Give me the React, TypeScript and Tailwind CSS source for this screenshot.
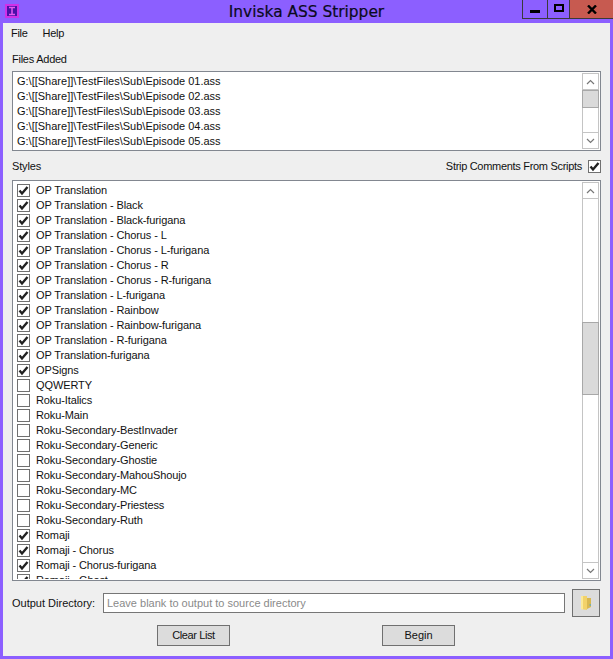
import React from "react";

const files = ["01", "02", "03", "04", "05"];
const styles: [string, boolean][] = [
  ["OP Translation", true],
  ["OP Translation - Black", true],
  ["OP Translation - Black-furigana", true],
  ["OP Translation - Chorus - L", true],
  ["OP Translation - Chorus - L-furigana", true],
  ["OP Translation - Chorus - R", true],
  ["OP Translation - Chorus - R-furigana", true],
  ["OP Translation - L-furigana", true],
  ["OP Translation - Rainbow", true],
  ["OP Translation - Rainbow-furigana", true],
  ["OP Translation - R-furigana", true],
  ["OP Translation-furigana", true],
  ["OPSigns", true],
  ["QQWERTY", false],
  ["Roku-Italics", false],
  ["Roku-Main", false],
  ["Roku-Secondary-BestInvader", false],
  ["Roku-Secondary-Generic", false],
  ["Roku-Secondary-Ghostie", false],
  ["Roku-Secondary-MahouShoujo", false],
  ["Roku-Secondary-MC", false],
  ["Roku-Secondary-Priestess", false],
  ["Roku-Secondary-Ruth", false],
  ["Romaji", true],
  ["Romaji - Chorus", true],
  ["Romaji - Chorus-furigana", true],
  ["Romaji - Ghost", true],
];

function Check({ on }: { on: boolean }) {
  return (
    <span className="w-[13px] h-[13px] shrink-0 border border-[#707070] bg-white flex items-center justify-center">
      {on && (
        <svg width="11" height="11" viewBox="0 0 11 11">
          <path d="M1.5 5.5 L4 8.5 L9.5 2" fill="none" stroke="#222" strokeWidth="2.4" />
        </svg>
      )}
    </span>
  );
}

function Arrow({ up }: { up?: boolean }) {
  return (
    <div className="h-[17px] shrink-0 border border-[#c4c4c4] flex items-center justify-center">
      <svg width="9" height="6" viewBox="0 0 9 6">
        <path d={up ? "M1 5 L4.5 1.5 L8 5" : "M1 1 L4.5 4.5 L8 1"} fill="none" stroke="#777" strokeWidth="1.2" />
      </svg>
    </div>
  );
}

function Scrollbar({ before, thumb }: { before: number; thumb: number }) {
  return (
    <div className="w-[17px] shrink-0 flex flex-col bg-white">
      <Arrow up />
      <div className="flex-1 flex flex-col border-x border-[#c4c4c4]">
        <div className="shrink-0" style={{ height: before }} />
        <div className="-mx-px shrink-0 bg-[#dadada] border border-[#a8a8a8]" style={{ height: thumb }} />
      </div>
      <Arrow />
    </div>
  );
}

export default function App() {
  return (
    <div
      className="w-[613px] h-[659px] bg-[#8c5fff] flex flex-col overflow-hidden text-[11px] text-[#111]"
      style={{ fontFamily: '"Liberation Sans", sans-serif' }}
    >
      <div className="h-[23px] shrink-0 flex relative">
        <svg className="absolute left-[5px] top-[4px]" width="14" height="14" viewBox="0 0 14 14">
          <rect width="14" height="14" fill="#d030e8" />
          <rect x="2" y="2" width="10" height="10" fill="#4a10a8" />
          <path d="M4 3.5H10M4 10.5H10M7 3.5V10.5" stroke="#e858f0" strokeWidth="1.5" />
        </svg>
        <div
          className="flex-1 text-center text-[15.4px] leading-[24px] text-[#0a0a20]"
          style={{ fontFamily: '"DejaVu Sans", sans-serif', WebkitTextStroke: "0.2px #0a0a20" }}
        >
          Inviska ASS Stripper
        </div>
        <div className="absolute left-[522px] top-0 h-[19px] w-[91px] flex border-b border-l border-[#3a3a3a]">
          <div className="w-[25px] border-r border-[#3a3a3a] flex items-end justify-center pb-[5px]">
            <div className="w-[10px] h-[3px] bg-black" />
          </div>
          <div className="w-[22px] border-r border-[#3a3a3a] flex items-center justify-center pb-[2px]">
            <div className="w-[10px] h-[8px] border-2 border-black" />
          </div>
          <div className="flex-1 bg-[#c75a50] flex items-center justify-center">
            <svg width="10" height="9" viewBox="0 0 10 9">
              <path d="M1 0.5 L9 8.5 M9 0.5 L1 8.5" stroke="black" strokeWidth="2.4" />
            </svg>
          </div>
        </div>
      </div>

      <div className="mx-[3px] h-[633px] shrink-0 bg-[#efefef] flex flex-col">
        <div className="h-[20px] flex items-center gap-[15px] pl-[8px] tracking-[-0.3px]">
          <span>File</span>
          <span>Help</span>
        </div>
        <div className="h-[28px] pl-[9px] flex items-end pb-[4px] leading-[15px] tracking-[-0.25px]">Files Added</div>

        <div className="mx-[9px] h-[80px] border border-[#828790] bg-white flex p-px">
          <div className="flex-1 pl-[3px] pt-[1px]">
            {files.map((f) => (
              <div key={f} className="h-[15px] leading-[15px] whitespace-nowrap">
                {`G:\\[[Share]]\\TestFiles\\Sub\\Episode ${f}.ass`}
              </div>
            ))}
          </div>
          <Scrollbar before={0} thumb={18} />
        </div>

        <div className="h-[29px] px-[9px] pt-[1px] flex items-center justify-between">
          <span className="tracking-[-0.15px]">Styles</span>
          <span className="flex items-center gap-[6px] tracking-[-0.3px]">
            Strip Comments From Scripts
            <Check on />
          </span>
        </div>

        <div className="mx-[9px] h-[401px] border border-[#828790] bg-white flex p-px">
          <div className="flex-1 overflow-hidden pl-[3px] pt-[1px]">
            {styles.map(([name, on]) => (
              <div key={name} className="h-[15px] flex items-center gap-[6px] whitespace-nowrap tracking-[-0.11px]">
                <Check on={on} />
                <span className="leading-[15px]">{name}</span>
              </div>
            ))}
          </div>
          <Scrollbar before={123} thumb={73} />
        </div>

        <div className="h-[36px] flex items-center pl-[9px] pr-[10px] mt-[4px]">
          <span className="w-[91px] shrink-0 whitespace-nowrap">Output Directory:</span>
          <div className="w-[462px] h-[20px] border border-[#767676] bg-white text-[#8a8a8a] pl-[3px] leading-[18px] whitespace-nowrap">
            Leave blank to output to source directory
          </div>
          <div className="ml-[7px] w-[28px] h-[28px] bg-[#dcdcdc] border border-[#707070] flex items-center justify-center">
            <svg width="12" height="16" viewBox="0 0 12 16">
              <path d="M1 1 L7 1 L7 15 L1 14 Z" fill="#f2d26a" />
              <path d="M7 3 L11 3 L11 12 L7 14 Z" fill="#d9b850" />
              <path d="M1 1 L1 14 L3 14.5 L3 1 Z" fill="#fbe998" />
              <rect x="9.5" y="9" width="1.5" height="2" fill="#7fb0a0" />
            </svg>
          </div>
        </div>

        <div className="flex pl-[154px] pt-[4px]">
          <div className="w-[73px] h-[21px] bg-[#dcdcdc] border border-[#707070] text-center leading-[19px] tracking-[-0.4px]">Clear List</div>
          <div className="ml-[152px] w-[73px] h-[21px] bg-[#dcdcdc] border border-[#707070] text-center leading-[19px]">Begin</div>
        </div>
      </div>
    </div>
  );
}
